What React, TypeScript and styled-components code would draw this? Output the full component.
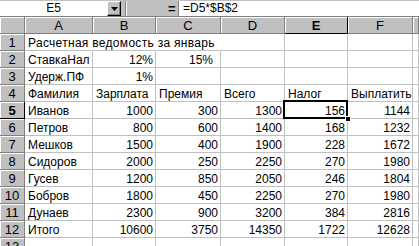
import React from "react";
import styled, { createGlobalStyle, css } from "styled-components";

const Global = createGlobalStyle`
  html, body { margin: 0; padding: 0; background: #ffffff; }
  body {
    width: 419px;
    height: 246px;
    overflow: hidden;
    font-family: "Liberation Sans", Arial, sans-serif;
    font-size: 12px;
    color: #000;
  }
`;

const Window = styled.div`
  width: 419px;
  height: 246px;
  overflow: hidden;
  display: flex;
  flex-direction: column;
  background: #c0c0c0;
`;

const FormulaBar = styled.div`
  display: flex;
  align-items: flex-start;
  height: 19px;
  box-sizing: border-box;
  padding-top: 1px;
  border-bottom: 1px solid #808080;
  background: #c0c0c0;
`;

const NameBox = styled.div`
  width: 107px;
  height: 15px;
  box-sizing: border-box;
  background: #ffffff;
  text-align: center;
  line-height: 15px;
  font-size: 12px;
`;

const DropButton = styled.div`
  width: 14px;
  height: 15px;
  box-sizing: border-box;
  background: #c0c0c0;
  border: 1px solid;
  border-color: #ffffff #000000 #000000 #ffffff;
  box-shadow: inset -1px -1px 0 #808080;
  display: flex;
  align-items: center;
  justify-content: center;
`;

const Divider = styled.div`
  width: 2px;
  height: 15px;
  margin-left: 4px;
  border-left: 1px solid #808080;
  border-right: 1px solid #ffffff;
  box-sizing: border-box;
`;

const Equals = styled.div`
  margin-left: auto;
  width: 9px;
  margin-right: 1px;
  font-weight: bold;
  line-height: 15px;
  font-size: 13px;
`;

const FormulaInput = styled.div`
  width: 241px;
  height: 15px;
  box-sizing: border-box;
  background: #ffffff;
  border-left: 1px solid #808080;
  padding-left: 4px;
  line-height: 15px;
  font-size: 12px;
`;

const Grid = styled.div`
  display: grid;
  grid-template-columns: 25px 68px 63px 65px 64px 63px 65px 6px;
  grid-auto-rows: 17px;
  background: #ffffff;
  flex: 1;
`;

const HeaderCell = styled.div<{ $active?: boolean }>`
  background: #c0c0c0;
  box-sizing: border-box;
  border-right: 1px solid #808080;
  border-bottom: 1px solid #808080;
  box-shadow: inset 1px 1px 0 #ffffff;
  text-align: center;
  padding-top: 1px;
  line-height: 15px;
  font-size: 13px;
  overflow: hidden;
  white-space: nowrap;
  ${(p) =>
    p.$active &&
    css`
      font-weight: bold;
      border-right-color: #000000;
      border-bottom-color: #000000;
    `}
`;

const Cell = styled.div<{
  $align: "left" | "right";
  $noRight?: boolean;
  $spill?: boolean;
  $padRight?: number;
  $selected?: boolean;
}>`
  position: relative;
  box-sizing: border-box;
  border-right: 1px solid ${(p) => (p.$noRight ? "transparent" : "#c0c0c0")};
  border-bottom: 1px solid #c0c0c0;
  padding: 2px ${(p) => p.$padRight ?? 2}px 0 3px;
  line-height: 14px;
  font-size: 12px;
  text-align: ${(p) => p.$align};
  white-space: nowrap;
  overflow: ${(p) => (p.$spill ? "visible" : "hidden")};
  ${(p) =>
    p.$spill &&
    css`
      letter-spacing: 0.3px;
    `}
  ${(p) =>
    p.$selected &&
    css`
      overflow: visible;
      z-index: 1;
      &::after {
        content: "";
        position: absolute;
        left: -2px;
        top: -2px;
        right: -1px;
        bottom: -1px;
        border: 2px solid #000000;
      }
      &::before {
        content: "";
        position: absolute;
        right: -4px;
        bottom: -4px;
        width: 4px;
        height: 4px;
        background: #000000;
        border: 1px solid #ffffff;
        z-index: 2;
      }
    `}
`;

type Val = string | number | null;

const columns = ["A", "B", "C", "D", "E", "F", ""];

const rows: Val[][] = [
  ["Расчетная ведомость за январь", null, null, null, null, null, null],
  ["СтавкаНал", "12%", "15%", null, null, null, null],
  ["Удерж.ПФ", "1%", null, null, null, null, null],
  ["Фамилия", "Зарплата", "Премия", "Всего", "Налог", "Выплатить", null],
  ["Иванов", 1000, 300, 1300, 156, 1144, null],
  ["Петров", 800, 600, 1400, 168, 1232, null],
  ["Мешков", 1500, 400, 1900, 228, 1672, null],
  ["Сидоров", 2000, 250, 2250, 270, 1980, null],
  ["Гусев", 1200, 850, 2050, 246, 1804, null],
  ["Бобров", 1800, 450, 2250, 270, 1980, null],
  ["Дунаев", 2300, 900, 3200, 384, 2816, null],
  ["Итого", 10600, 3750, 14350, 1722, 12628, null],
  [null, null, null, null, null, null, null],
];

const activeRow = 5;
const activeCol = 4;

const isRight = (v: Val) =>
  typeof v === "number" || (typeof v === "string" && v.endsWith("%"));

export default function App() {
  return (
    <Window>
      <Global />
      <FormulaBar>
        <NameBox>E5</NameBox>
        <DropButton>
          <svg width="7" height="4" viewBox="0 0 7 4">
            <polygon points="0,0 7,0 3.5,4" fill="#000" />
          </svg>
        </DropButton>
        <Divider />
        <Equals>=</Equals>
        <FormulaInput>=D5*$B$2</FormulaInput>
      </FormulaBar>
      <Grid>
        <HeaderCell />
        {columns.map((c, i) => (
          <HeaderCell key={i} $active={i === activeCol}>
            {c}
          </HeaderCell>
        ))}
        {rows.map((r, ri) => {
          const rowNum = ri + 1;
          return (
            <React.Fragment key={ri}>
              <HeaderCell $active={rowNum === activeRow}>{rowNum}</HeaderCell>
              {r.map((v, ci) => (
                <Cell
                  key={ci}
                  $align={isRight(v) ? "right" : "left"}
                  $noRight={rowNum === 1 && ci < 3}
                  $spill={rowNum === 1 && ci === 0}
                  $padRight={rowNum === 2 && ci === 2 ? 7 : 2}
                  $selected={rowNum === activeRow && ci === activeCol}
                >
                  {v}
                </Cell>
              ))}
            </React.Fragment>
          );
        })}
      </Grid>
    </Window>
  );
}
